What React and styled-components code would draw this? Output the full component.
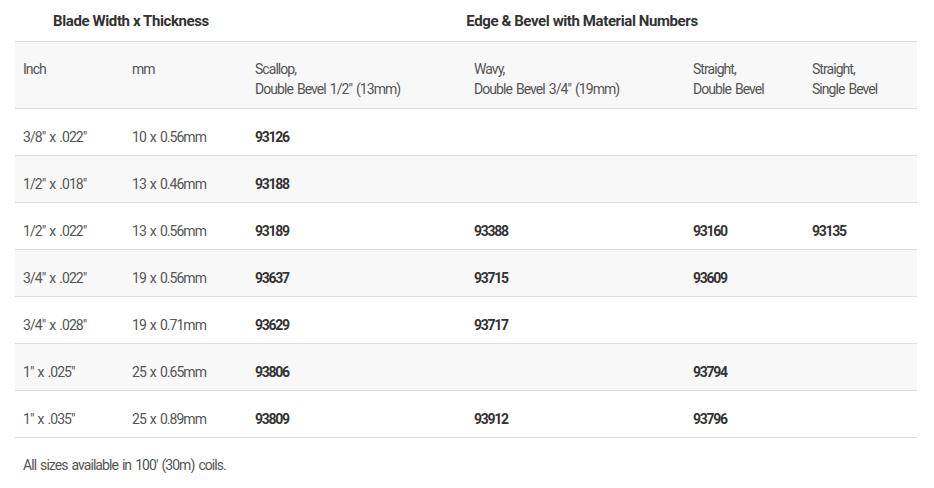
import React from "react";
import styled, { createGlobalStyle } from "styled-components";

const GlobalStyle = createGlobalStyle`
  body {
    margin: 0;
    background: #fff;
    font-family: Roboto, "Liberation Sans", sans-serif;
  }
`;

const Wrapper = styled.div`
  padding: 0 17px 0 15px;
`;

const Table = styled.table`
  width: 100%;
  border-collapse: collapse;
  table-layout: fixed;
  font-size: 14px;
  letter-spacing: -0.95px;
  word-spacing: 1.5px;
  color: #555;
`;

const GroupCell = styled.th`
  height: 41px;
  padding: 0;
  text-align: center;
  font-weight: 700;
  font-size: 15px;
  letter-spacing: -0.4px;
  word-spacing: 0;
  color: #333;
  vertical-align: middle;
`;

const HeadRow = styled.tr`
  background: #f8f8f8;
  border-top: 1px solid #ddd;
`;

const HeadCell = styled.th`
  padding: 17px 8px 9px;
  text-align: left;
  font-weight: 400;
  line-height: 20px;
  color: #555;
  vertical-align: top;
`;

const Row = styled.tr`
  background: ${({ $shade }) => ($shade ? "#f8f8f8" : "#fff")};
  border-top: 1px solid #ddd;
  border-bottom: 1px solid #ddd;
`;

const Cell = styled.td`
  height: 36px;
  padding: 10px 8px 0;
  vertical-align: middle;
  font-weight: ${({ $bold }) => ($bold ? 700 : 400)};
  letter-spacing: ${({ $bold }) => ($bold ? "-1.3px" : "-0.95px")};
  color: ${({ $bold }) => ($bold ? "#333" : "#555")};
`;

const Note = styled.p`
  margin: 19px 0 0 8px;
  font-size: 14px;
  letter-spacing: -0.95px;
  word-spacing: 1.5px;
  color: #555;
`;

const rows = [
  ["3/8\" x .022\"", "10 x 0.56mm", "93126", "", "", ""],
  ["1/2\" x .018\"", "13 x 0.46mm", "93188", "", "", ""],
  ["1/2\" x .022\"", "13 x 0.56mm", "93189", "93388", "93160", "93135"],
  ["3/4\" x .022\"", "19 x 0.56mm", "93637", "93715", "93609", ""],
  ["3/4\" x .028\"", "19 x 0.71mm", "93629", "93717", "", ""],
  ["1\" x .025\"", "25 x 0.65mm", "93806", "", "93794", ""],
  ["1\" x .035\"", "25 x 0.89mm", "93809", "93912", "93796", ""],
];

export default function App() {
  return (
    <Wrapper>
      <GlobalStyle />
      <Table>
        <colgroup>
          <col style={{ width: 109 }} />
          <col style={{ width: 123 }} />
          <col style={{ width: 219 }} />
          <col style={{ width: 219 }} />
          <col style={{ width: 119 }} />
          <col />
        </colgroup>
        <thead>
          <tr>
            <GroupCell colSpan={2}>Blade Width x Thickness</GroupCell>
            <GroupCell colSpan={4}>Edge &amp; Bevel with Material Numbers</GroupCell>
          </tr>
          <HeadRow>
            <HeadCell>Inch</HeadCell>
            <HeadCell>mm</HeadCell>
            <HeadCell>Scallop,<br />Double Bevel 1/2" (13mm)</HeadCell>
            <HeadCell>Wavy,<br />Double Bevel 3/4" (19mm)</HeadCell>
            <HeadCell>Straight,<br />Double Bevel</HeadCell>
            <HeadCell>Straight,<br />Single Bevel</HeadCell>
          </HeadRow>
        </thead>
        <tbody>
          {rows.map((r, i) => (
            <Row key={i} $shade={i % 2 === 1}>
              {r.map((v, j) => (
                <Cell key={j} $bold={j > 1}>{v}</Cell>
              ))}
            </Row>
          ))}
        </tbody>
      </Table>
      <Note>All sizes available in 100' (30m) coils.</Note>
    </Wrapper>
  );
}
